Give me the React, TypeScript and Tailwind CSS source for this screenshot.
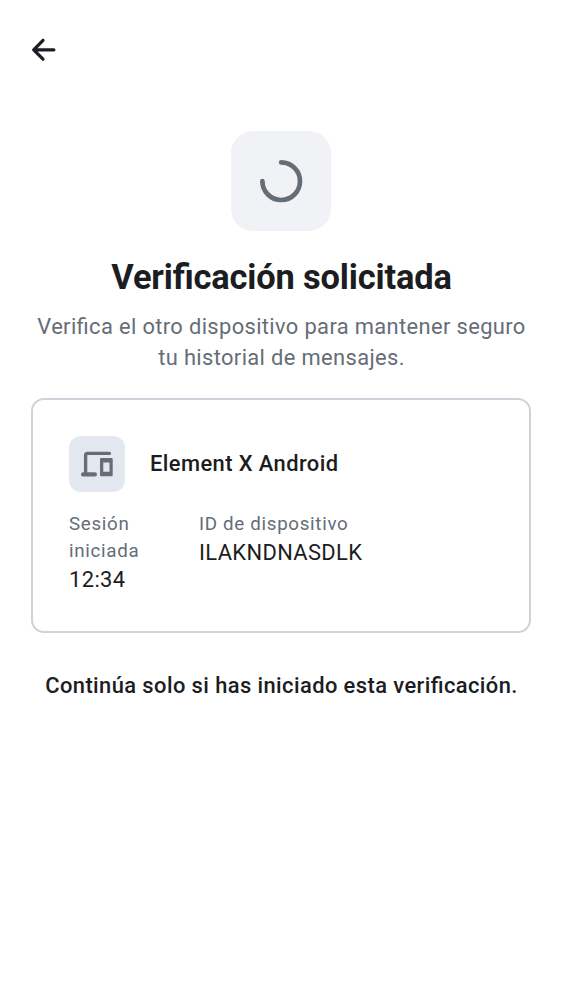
export default function App() {
  return (
    <main className="flex h-[1000px] w-[562px] flex-col bg-white px-[31px] font-['Roboto',sans-serif] text-[#1b1d22] [font-feature-settings:'liga'_1]">
      <header className="flex h-[100px] items-center">
        <button aria-label="Atrás" className="-ml-[6px]">
          <svg viewBox="0 0 38 38" className="size-[38px]" fill="none" stroke="currentColor" strokeWidth="3.2" strokeLinecap="round" strokeLinejoin="round">
            <path d="M18 9.3 8.7 18.8l9.3 9.4M9.5 18.8h19.4" />
          </svg>
        </button>
      </header>
      <section className="flex flex-col items-center pt-[31px] text-center">
        <div className="flex size-[100px] items-center justify-center rounded-[22px] bg-[#f0f2f5] text-[#656d77]">
          <svg viewBox="0 0 50 50" className="size-[50px]" fill="none" stroke="currentColor" strokeWidth="4.7" strokeLinecap="round">
            <path d="M25.2 6.4A18.8 18.8 0 1 1 6.4 25.2" />
          </svg>
        </div>
        <h1 className="mt-[25px] whitespace-nowrap pl-px text-[34.4px] leading-[42px] font-bold tracking-[-0.15px]">Verificación solicitada</h1>
        <p className="mt-[13px] w-[500px] pl-px text-[21.9px] leading-[31.25px] tracking-[0.36px] text-[#656d77]">
          Verifica el otro dispositivo para mantener seguro tu historial de mensajes.
        </p>
      </section>
      <section className="mt-[24px] h-[235px] rounded-[13px] border-2 border-[#cdd3da] px-[36px] pt-[36px]">
        <div className="flex items-center gap-[25px]">
          <div className="flex size-[56px] items-center justify-center rounded-[12px] bg-[#e3e8f0] text-[#656d77]">
            <svg viewBox="0 0 38 38" className="size-[38px]" fill="none" stroke="currentColor" strokeWidth="3.4" strokeLinecap="round" strokeLinejoin="round">
              <path d="M31.4 8.4H9.6c-1.4 0-2 .6-2 2v18" />
              <path d="M5.1 29.4h11.8" strokeWidth="4.2" />
              <path d="M23 13h10.7q1 0 1 1v16.3q0 1-1 1H23q-1 0-1-1V14q0-1 1-1Zm2.3 4.4v9.4h6.2v-9.4Z" fill="currentColor" fillRule="evenodd" stroke="none" />
            </svg>
          </div>
          <h2 className="text-[21.9px] leading-[31px] font-medium tracking-[0.42px]">Element X Android</h2>
        </div>
        <div className="mt-[19px] flex">
          <div className="w-[130px]">
            <p className="w-[105px] text-[18.75px] leading-[27px] tracking-[0.68px] text-[#656d77]">Sesión iniciada</p>
            <p className="-mt-px text-[21.9px] leading-[31px] tracking-[0.39px]">12:34</p>
          </div>
          <div>
            <p className="text-[18.75px] leading-[27px] tracking-[0.68px] text-[#656d77]">ID de dispositivo</p>
            <p className="-mt-px text-[21.9px] leading-[31px] tracking-[0.37px]">ILAKNDNASDLK</p>
          </div>
        </div>
      </section>
      <p className="mt-[37px] whitespace-nowrap pl-px text-center text-[21.9px] leading-[31px] font-medium tracking-[0.42px]">Continúa solo si has iniciado esta verificación.</p>
    </main>
  );
}
